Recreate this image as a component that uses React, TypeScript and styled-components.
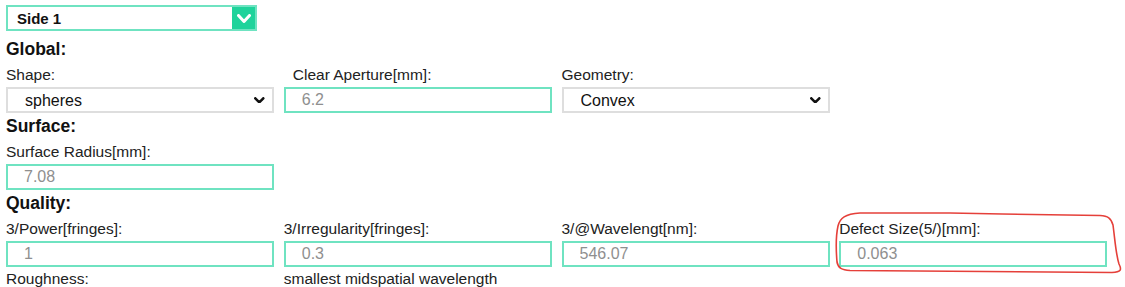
import React from "react";
import styled, { createGlobalStyle } from "styled-components";

const GlobalStyle = createGlobalStyle`
  html, body { margin: 0; padding: 0; background: #ffffff; }
  body { font-family: "Liberation Sans", Arial, sans-serif; color: #222; }
  * { box-sizing: border-box; }
`;

const Page = styled.div`
  position: relative;
  width: 1125px;
  height: 287px;
  overflow: hidden;
  padding: 5px 0 0 6px;
`;

const SideSelect = styled.div`
  display: flex;
  align-items: stretch;
  width: 251px;
  height: 26px;
  border: 2px solid #6fe3c1;
  background: #fff;
`;

const SideNative = styled.select`
  flex: 1;
  appearance: none;
  border: none;
  outline: none;
  background: transparent;
  padding: 0 0 0 9px;
  font-family: "Liberation Sans", Arial, sans-serif;
  font-size: 15px;
  font-weight: bold;
  color: #111;
`;

const GreenBox = styled.div`
  width: 23px;
  display: flex;
  align-items: center;
  justify-content: center;
  background: #1fd39b;
`;

const Heading = styled.div<{ $top: number }>`
  margin-top: ${(p) => p.$top}px;
  font-size: 17.5px;
  line-height: 19px;
  font-weight: bold;
  color: #111;
`;

const Grid = styled.div`
  margin-top: 7px;
  display: grid;
  grid-template-columns: repeat(4, 268px);
  column-gap: 9.75px;
  row-gap: 3px;
`;

const Field = styled.div`
  display: flex;
  flex-direction: column;
`;

const Label = styled.div<{ $indent?: number }>`
  font-size: 15.5px;
  line-height: 18px;
  color: #222;
  padding-left: ${(p) => p.$indent ?? 0}px;
  white-space: nowrap;
`;

const TextInput = styled.input`
  margin-top: 3px;
  height: 26px;
  width: 100%;
  border: 2px solid #6fe3c1;
  padding: 0 0 0 16px;
  font-family: "Liberation Sans", Arial, sans-serif;
  font-size: 16px;
  color: #8f8f8f;
  outline: none;
  background: #fff;
`;

const SelectBox = styled.div`
  margin-top: 3px;
  height: 26px;
  display: flex;
  align-items: center;
  border: 2px solid #dedede;
  padding-right: 7px;
  background: #fff;
`;

const NativeSelect = styled.select`
  flex: 1;
  appearance: none;
  border: none;
  outline: none;
  background: transparent;
  padding: 0 0 0 17px;
  font-family: "Liberation Sans", Arial, sans-serif;
  font-size: 16px;
  color: #111;
`;

const Annotation = styled.svg`
  position: absolute;
  left: 0;
  top: 0;
  pointer-events: none;
`;

const Chevron = ({ color, w, h, sw }: { color: string; w: number; h: number; sw: number }) => (
  <svg width={w + sw} height={h + sw} viewBox={`${-sw / 2} ${-sw / 2} ${w + sw} ${h + sw}`}>
    <path d={`M0 0 L${w / 2} ${h} L${w} 0`} fill="none" stroke={color} strokeWidth={sw} strokeLinecap="round" strokeLinejoin="round" />
  </svg>
);

const Select = ({ value }: { value: string }) => (
  <SelectBox>
    <NativeSelect value={value} onChange={() => {}}>
      <option>{value}</option>
    </NativeSelect>
    <Chevron color="#111" w={8} h={4} sw={2.6} />
  </SelectBox>
);

const Input = ({ value }: { value: string }) => <TextInput value={value} readOnly />;

export default function App() {
  return (
    <>
      <GlobalStyle />
      <Page>
        <SideSelect>
          <SideNative value="Side 1" onChange={() => {}}>
            <option>Side 1</option>
          </SideNative>
          <GreenBox>
            <Chevron color="#ffffff" w={11} h={6} sw={3} />
          </GreenBox>
        </SideSelect>

        <Heading $top={9}>Global:</Heading>
        <Grid>
          <Field>
            <Label>Shape:</Label>
            <Select value="spheres" />
          </Field>
          <Field>
            <Label $indent={9}>Clear Aperture[mm]:</Label>
            <Input value="6.2" />
          </Field>
          <Field>
            <Label>Geometry:</Label>
            <Select value="Convex" />
          </Field>
        </Grid>

        <Heading $top={4}>Surface:</Heading>
        <Grid>
          <Field>
            <Label>Surface Radius[mm]:</Label>
            <Input value="7.08" />
          </Field>
        </Grid>

        <Heading $top={4}>Quality:</Heading>
        <Grid>
          <Field>
            <Label>3/Power[fringes]:</Label>
            <Input value="1" />
          </Field>
          <Field>
            <Label>3/Irregularity[fringes]:</Label>
            <Input value="0.3" />
          </Field>
          <Field>
            <Label>3/@Wavelengt[nm]:</Label>
            <Input value="546.07" />
          </Field>
          <Field>
            <Label>Defect Size(5/)[mm]:</Label>
            <Input value="0.063" />
          </Field>
          <Field>
            <Label>Roughness:</Label>
          </Field>
          <Field>
            <Label>smallest midspatial wavelength</Label>
          </Field>
        </Grid>

        <Annotation width="1125" height="287" viewBox="0 0 1125 287">
          <path
            d="M838 226 C840 218 845 214 860 213 L950 213 C1000 214 1060 215 1100 215.5 C1108 216 1111 218 1113 225 C1115 240 1116 255 1119 264 C1122 270 1121 272 1112 272.5 C1050 272 950 271 850 270.5 C842 270 838 268 837 262 C836 250 836 235 838 226 Z"
            fill="none"
            stroke="#e5403a"
            strokeWidth="1.6"
          />
        </Annotation>
      </Page>
    </>
  );
}
